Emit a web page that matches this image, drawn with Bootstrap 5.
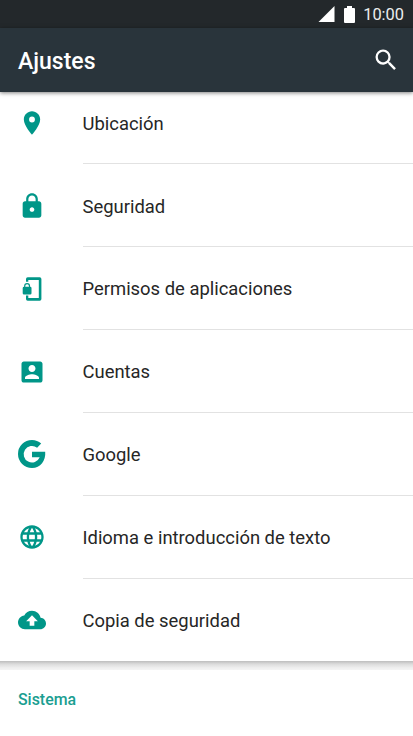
<!DOCTYPE html>
<html lang="es">
<head>
<meta charset="utf-8">
<meta name="viewport" content="width=device-width, initial-scale=1">
<title>Ajustes</title>
<link href="https://cdn.jsdelivr.net/npm/bootstrap@5.3.0/dist/css/bootstrap.min.css" rel="stylesheet">
<style>
body{font-family:Roboto,"Liberation Sans",sans-serif;color:#262626;height:736px}
.status{height:28px;background:#23282b;color:#eceeee;font-size:16.4px;padding-right:9px}
.status .battery{margin:0 8px 0 9px}
.status .clock{padding-top:2px}
.toolbar{height:64px;background:#29343b;padding:2px 13.500px 0 18px;box-shadow:0 1px 4px rgba(0,0,0,.5);z-index:2}
.toolbar h1{font-size:23px;font-weight:500;padding-top:2px}
.toolbar svg{margin-top:-2px}
.scroller{flex:1}
.settings{margin-top:-10.400px;height:579.400px;box-shadow:0 1px 0 #bdbdbd}
.setting{height:82.83px;padding-left:18px}
.setting svg,.toolbar svg{width:28px;height:28px;fill:currentColor;flex:none}
.setting svg{color:#009688}
.setting .title{margin-left:36.5px;font-size:18.42px;border-bottom:1.5px solid #e2e2e2;padding-top:2px}
.setting:last-child .title{border-color:transparent}
.gap-band{height:9px;background:linear-gradient(#bdbdbd,#dcdcdc 35%,#eee 75%,#f4f4f4)}
.section-title{font-size:15.9px;font-weight:500;color:#1a9e91;padding:20px 18px 0}
</style>
<script src="https://cdn.jsdelivr.net/npm/bootstrap@5.3.0/dist/js/bootstrap.bundle.min.js"></script>
</head>
<body class="bg-white d-flex flex-column overflow-hidden">
<div class="status d-flex align-items-center justify-content-end lh-1">
  <svg width="17" height="16" viewBox="0 0 17 16" fill="#fff"><path d="M.5 16H16.500V0z"/></svg>
  <svg class="battery" width="11" height="17" viewBox="0 0 11 17" fill="#fff"><path d="M3 0h5v2h2q1 0 1 1v13q0 1-1 1H1q-1 0-1-1V3q0-1 1-1h2z"/></svg>
  <span class="clock">10:00</span>
</div>
<header class="toolbar d-flex align-items-center justify-content-between position-relative text-white">
  <h1 class="m-0">Ajustes</h1>
  <svg viewBox="0 0 24 24"><path d="M15.500 14h-.79l-.28-.27A6.470 6.470 0 0 0 16 9.500 6.500 6.500 0 1 0 9.500 16c1.610 0 3.090-.59 4.230-1.570l.27.28v.79l5 4.990L20.490 19l-4.990-5zm-6 0C7.010 14 5 11.990 5 9.500S7.010 5 9.500 5 14 7.010 14 9.500 11.990 14 9.500 14z"/></svg>
</header>
<main class="scroller">
  <ul class="settings list-unstyled mb-0">
    <li class="setting d-flex align-items-center"><svg viewBox="0 0 24 24"><path d="M12 2C8.130 2 5 5.130 5 9c0 5.250 7 13 7 13s7-7.750 7-13c0-3.870-3.130-7-7-7zm0 9.500a2.500 2.500 0 0 1 0-5 2.500 2.500 0 0 1 0 5z"/></svg><span class="title flex-grow-1 h-100 d-flex align-items-center">Ubicación</span></li>
    <li class="setting d-flex align-items-center"><svg viewBox="0 0 24 24"><path d="M18 8h-1V6c0-2.760-2.240-5-5-5S7 3.240 7 6v2H6c-1.100 0-2 .9-2 2v10c0 1.100.9 2 2 2h12c1.100 0 2-.9 2-2V10c0-1.100-.9-2-2-2zm-6 9c-1.100 0-2-.9-2-2s.9-2 2-2 2 .9 2 2-.9 2-2 2zm3.100-9H8.900V6c0-1.710 1.390-3.100 3.100-3.100s3.100 1.390 3.100 3.100v2z"/></svg><span class="title flex-grow-1 h-100 d-flex align-items-center">Seguridad</span></li>
    <li class="setting d-flex align-items-center"><svg viewBox="0 0 28 28"><path d="M8 6.700V4q0-1.700 1.700-1.700h12Q23.400 2.300 23.400 4v20q0 1.700-1.700 1.700h-12Q8 25.700 8 24v-3.500h2.300v2.400h10.500V5.100H10.300v1.600z"/><path d="M12.100 11.700V11a3 3 0 0 0-6 0v.7q-1.400 0-1.400 1.300v5.300q0 1.300 1.300 1.300h6.200q1.300 0 1.300-1.300V13q0-1.300-1.400-1.300zm-4.800 0V11a1.800 1.800 0 0 1 3.600 0v.7z"/></svg><span class="title flex-grow-1 h-100 d-flex align-items-center">Permisos de aplicaciones</span></li>
    <li class="setting d-flex align-items-center"><svg viewBox="0 0 24 24"><path d="M3 5v14c0 1.100.89 2 2 2h14c1.100 0 2-.9 2-2V5c0-1.100-.9-2-2-2H5c-1.110 0-2 .9-2 2zm12 4c0 1.660-1.340 3-3 3s-3-1.340-3-3 1.340-3 3-3 3 1.340 3 3zm-9 8c0-2 4-3.100 6-3.100s6 1.100 6 3.100v1H6v-1z"/></svg><span class="title flex-grow-1 h-100 d-flex align-items-center">Cuentas</span></li>
    <li class="setting d-flex align-items-center"><svg viewBox="0 0 28 28"><path d="M14 11.700H27.200C28 20.500 22.500 28 14 28A14 14 0 0 1 14 0C17.500 0 20.700 1.300 23.200 3.600L19.100 7.700A8.300 8.300 0 1 0 21.700 17.300H14z"/></svg><span class="title flex-grow-1 h-100 d-flex align-items-center">Google</span></li>
    <li class="setting d-flex align-items-center"><svg viewBox="0 0 24 24"><path d="M11.990 2C6.470 2 2 6.480 2 12s4.470 10 9.990 10C17.520 22 22 17.520 22 12S17.520 2 11.990 2zm6.930 6h-2.950a15.650 15.650 0 0 0-1.380-3.560A8.030 8.030 0 0 1 18.920 8zM12 4.040c.83 1.200 1.480 2.530 1.910 3.960h-3.820c.43-1.430 1.080-2.760 1.910-3.960zM4.260 14C4.100 13.360 4 12.690 4 12s.1-1.360.26-2h3.380c-.08.66-.14 1.320-.14 2s.06 1.340.14 2H4.260zm.82 2h2.950c.32 1.250.78 2.450 1.380 3.560A7.987 7.987 0 0 1 5.080 16zm2.950-8H5.080a7.987 7.987 0 0 1 4.330-3.560A15.650 15.650 0 0 0 8.030 8zM12 19.960c-.83-1.200-1.480-2.530-1.910-3.960h3.820c-.43 1.430-1.080 2.760-1.910 3.960zM14.340 14H9.660c-.09-.66-.16-1.320-.16-2s.07-1.350.16-2h4.680c.09.65.16 1.320.16 2s-.07 1.340-.16 2zm.25 5.560c.6-1.110 1.060-2.310 1.380-3.560h2.950a8.030 8.030 0 0 1-4.330 3.560zM16.360 14c.08-.66.14-1.320.14-2s-.06-1.340-.14-2h3.380c.16.64.26 1.310.26 2s-.1 1.360-.26 2h-3.380z"/></svg><span class="title flex-grow-1 h-100 d-flex align-items-center">Idioma e introducción de texto</span></li>
    <li class="setting d-flex align-items-center"><svg viewBox="0 0 24 24"><path d="M19.350 10.040C18.670 6.590 15.640 4 12 4 9.110 4 6.600 5.640 5.350 8.040 2.340 8.360 0 10.910 0 14c0 3.310 2.690 6 6 6h13c2.760 0 5-2.240 5-5 0-2.640-2.050-4.780-4.650-4.960zM14 13v4h-4v-4H7l5-5 5 5h-3z"/></svg><span class="title flex-grow-1 h-100 d-flex align-items-center">Copia de seguridad</span></li>
  </ul>
  <div class="gap-band"></div>
  <h2 class="section-title m-0">Sistema</h2>
</main>
</body>
</html>
